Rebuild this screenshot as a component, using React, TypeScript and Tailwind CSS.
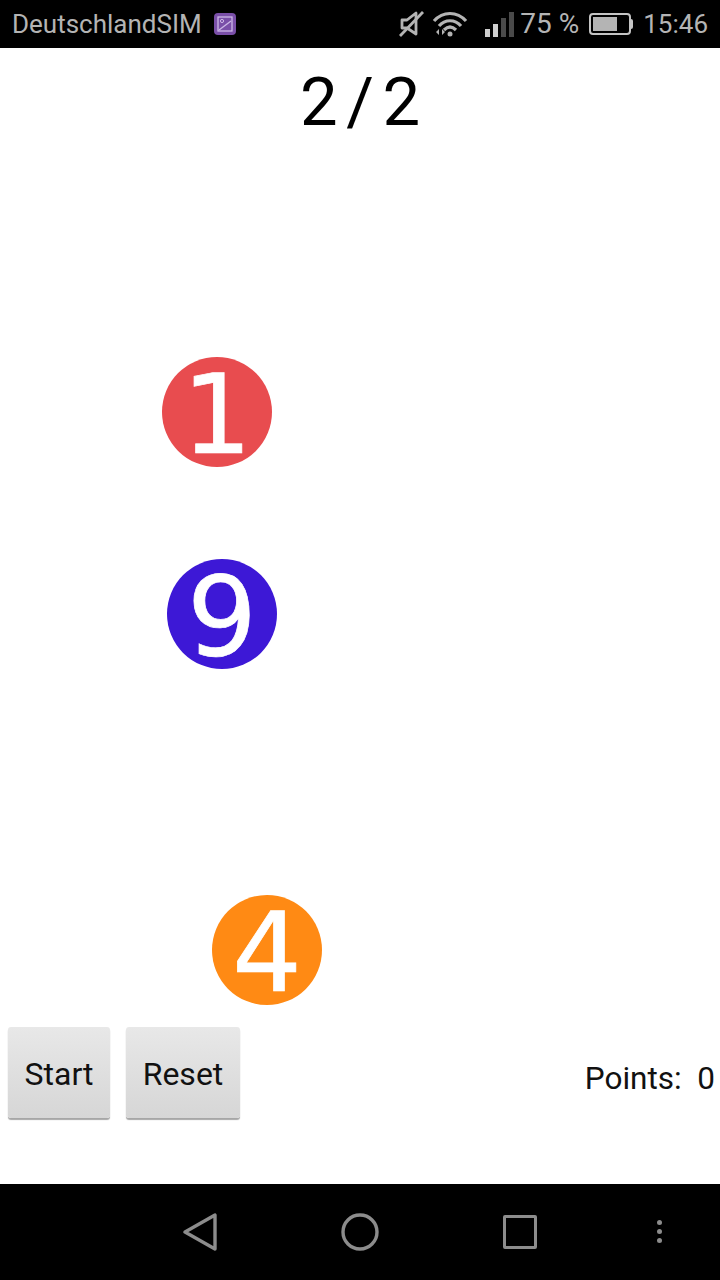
import React from 'react';

const bubbles = [
  { n: '1', cls: 'left-[162px] top-[309px] bg-[#e84c4f]' },
  { n: '9', cls: 'left-[167px] top-[511px] bg-[#3d18d6]' },
  { n: '4', cls: 'left-[212px] top-[847px] bg-[#ff8a14]' },
];

const StatusBar = () => (
  <div className="flex h-12 items-center justify-between bg-black pl-3 pr-3 text-[26px] text-[#b4b4b4]">
    <div className="flex items-center gap-[11px]">
      <span>DeutschlandSIM</span>
      <svg width="24" height="24" viewBox="0 0 24 24">
        <rect x="1" y="1" width="22" height="22" rx="4" fill="#7a4fa8" />
        <rect x="5" y="5" width="14" height="14" fill="none" stroke="#cdb8e6" strokeWidth="1.3" />
        <circle cx="9" cy="9" r="1.6" fill="none" stroke="#cdb8e6" strokeWidth="1" />
        <path d="M6 18 L18 9" stroke="#cdb8e6" strokeWidth="1.3" />
      </svg>
    </div>
    <div className="flex items-center">
      <svg width="26" height="28" viewBox="0 0 26 28" className="mr-[7px]" fill="none" stroke="#b4b4b4" strokeWidth="2.8">
        <path d="M3 10 H8 L17 3 V24 L8 18 H3 Z" strokeLinejoin="round" />
        <path d="M1 26 L24 2" />
      </svg>
      <svg width="36" height="26" viewBox="0 0 36 26" className="mr-[17px]" fill="none" stroke="#b4b4b4" strokeWidth="3.2">
        <path d="M2 10 C11 0 25 0 34 10" />
        <path d="M7 15 C13 8 23 8 29 15" />
        <path d="M12 19 C16 15 20 15 24 19" />
        <circle cx="18" cy="23" r="2.5" fill="#b4b4b4" stroke="none" />
        <path d="M4 21 L7 18 V24 Z M13 21 L10 18 V24 Z" fill="#b4b4b4" stroke="none" />
      </svg>
      <div className="mr-[6px] flex items-end gap-[3px]">
        <div className="h-[8px] w-[5px] bg-[#cfcfcf]" />
        <div className="h-[13px] w-[5px] bg-[#cfcfcf]" />
        <div className="h-[19px] w-[5px] bg-[#4a4a4a]" />
        <div className="h-[25px] w-[5px] bg-[#4a4a4a]" />
      </div>
      <span className="mr-[10px] text-[28px] leading-none">75 %</span>
      <div className="mr-[10px] flex items-center">
        <div className="h-[22px] w-[42px] rounded-[4px] border-2 border-[#c4c4c4] p-[2px] pr-[12px]">
          <div className="h-full w-full bg-[#b4b4b4]" />
        </div>
        <div className="h-[10px] w-[2px] rounded-r bg-[#c4c4c4]" />
      </div>
      <span>15:46</span>
    </div>
  </div>
);

const GameButton = ({ label, cls }: { label: string; cls: string }) => (
  <button className={`h-[91px] rounded-[3px] bg-gradient-to-b from-[#e8e8e8] to-[#d6d6d6] pt-[2px] text-[32px] text-[#111] shadow-[0_2px_1px_rgba(0,0,0,0.35)] ${cls}`}>
    {label}
  </button>
);

export default function App() {
  return (
    <div className="flex h-[1280px] w-[720px] flex-col overflow-hidden bg-white font-['Roboto',sans-serif]">
      <StatusBar />
      <div className="relative flex flex-1 flex-col">
        <div className="mt-[11px] text-center text-[67px] leading-[86px] text-black [word-spacing:-8px]">2 / 2</div>
        {bubbles.map((b) => (
          <div
            key={b.n}
            className={`absolute flex h-[110px] w-[110px] items-center justify-center rounded-full pt-[5px] font-['DejaVu_Sans',sans-serif] text-[110px] leading-none text-white [-webkit-text-stroke:0.7px_white] ${b.cls}`}
          >
            {b.n}
          </div>
        ))}
        <div className="mt-auto mb-[66px] flex items-center pl-2 pr-[5px]">
          <GameButton label="Start" cls="w-[102px]" />
          <GameButton label="Reset" cls="ml-4 w-[114px]" />
          <div className="ml-auto mt-[13px] whitespace-pre text-[31.5px] text-[#111]">Points:  0</div>
        </div>
      </div>
      <div className="flex h-24 items-center bg-black pb-[1px] pl-[183px]">
        <svg width="34" height="38" viewBox="0 0 34 38" fill="none" stroke="#8c8c8c" strokeWidth="3.4" strokeLinejoin="round">
          <path d="M2 19 L32 2 V36 Z" />
        </svg>
        <svg width="38" height="38" viewBox="0 0 38 38" className="ml-[124px]" fill="none" stroke="#8c8c8c" strokeWidth="3.4">
          <circle cx="19" cy="19" r="17" />
        </svg>
        <div className="ml-[124px] h-[34px] w-[34px] rounded-[2px] border-[3.5px] border-[#8c8c8c]" />
        <div className="ml-[120px] flex flex-col gap-[4px]">
          <div className="h-[5px] w-[5px] rounded-full bg-[#8c8c8c]" />
          <div className="h-[5px] w-[5px] rounded-full bg-[#8c8c8c]" />
          <div className="h-[5px] w-[5px] rounded-full bg-[#8c8c8c]" />
        </div>
      </div>
    </div>
  );
}
